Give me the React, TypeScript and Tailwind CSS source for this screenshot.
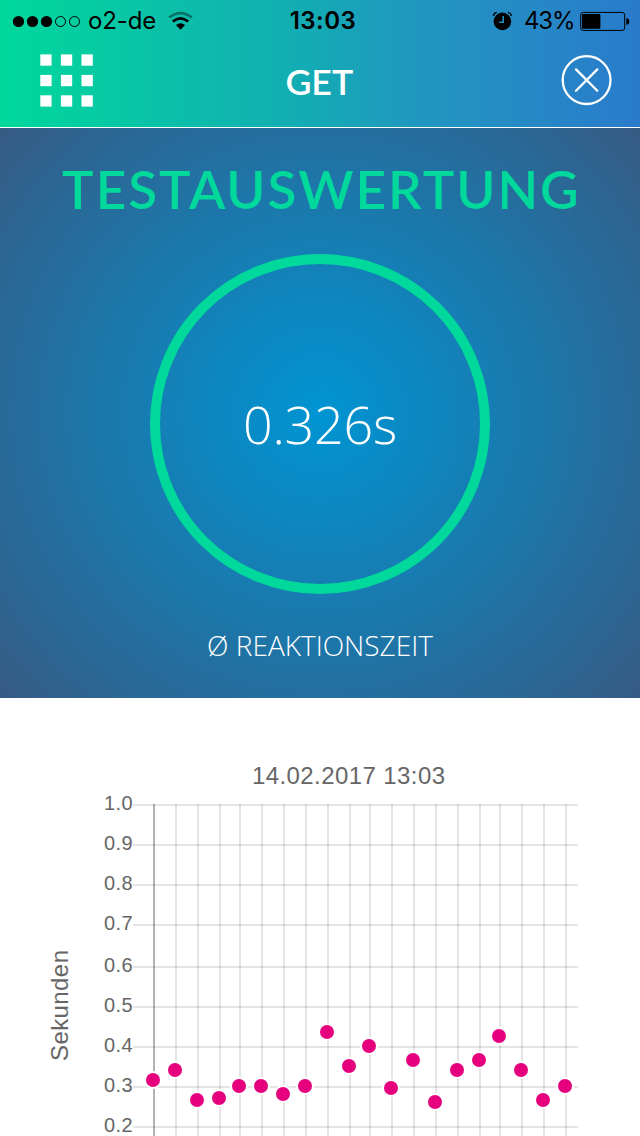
const POINTS = [
  { x: 153, y: 382 },
  { x: 175, y: 372 },
  { x: 197, y: 402 },
  { x: 219, y: 400 },
  { x: 239, y: 388 },
  { x: 261, y: 388 },
  { x: 283, y: 396 },
  { x: 305, y: 388 },
  { x: 327, y: 334 },
  { x: 349, y: 368 },
  { x: 369, y: 348 },
  { x: 391, y: 390 },
  { x: 413, y: 362 },
  { x: 435, y: 404 },
  { x: 457, y: 372 },
  { x: 479, y: 362 },
  { x: 499, y: 338 },
  { x: 521, y: 372 },
  { x: 543, y: 402 },
  { x: 565, y: 388 },
];

const TICKS = [
  { label: "1.0", y: 107 },
  { label: "0.9", y: 147 },
  { label: "0.8", y: 187 },
  { label: "0.7", y: 227 },
  { label: "0.6", y: 269 },
  { label: "0.5", y: 309 },
  { label: "0.4", y: 349 },
  { label: "0.3", y: 389 },
  { label: "0.2", y: 429 },
];

function StatusBar() {
  return (
    <div className="grid h-10 grid-cols-[1fr_auto_1fr] items-center pl-3 pr-[10px] font-['Inter',sans-serif] text-[24px] leading-10 text-black">
      <div className="flex items-center">
        <svg width="70" height="14" viewBox="0 0 70 14">
          {[6.5, 20.5, 34.5].map((cx) => (
            <circle key={cx} cx={cx} cy="7.5" r="5.6" />
          ))}
          {[48.5, 62.5].map((cx) => (
            <circle key={cx} cx={cx} cy="7.5" r="5" fill="none" stroke="#000" />
          ))}
        </svg>
        <span className="ml-[6px] w-[69px] whitespace-nowrap pt-px tracking-[-0.1px]">
          o2-de
        </span>
        <svg
          className="ml-[11px]"
          width="25"
          height="20"
          viewBox="0 0 25 20"
          fill="none"
          stroke="#000"
        >
          <path d="M1.2 6.5Q12.5-2.3 23.8 6.5" strokeWidth="2.8" opacity="0.4" />
          <path d="M4.8 10.5Q12.5 4.2 20.2 10.5" strokeWidth="2.8" />
          <path
            d="M7.9 14.1Q12.5 10.2 17.1 14.1L12.5 18.8Z"
            fill="#000"
            stroke="none"
          />
        </svg>
      </div>
      <span className="whitespace-nowrap pl-1 pt-px text-center font-semibold tracking-[0.5px]">
        13:03
      </span>
      <div className="flex items-center justify-end">
        <svg className="mr-3" width="20" height="20" viewBox="0 0 20 20">
          <circle cx="10.4" cy="10.4" r="8.8" />
          <path
            d="M1.4 4.8Q1.9 2 4.8 1.4M19.4 4.8Q18.9 2 16 1.4"
            fill="none"
            stroke="#000"
            strokeWidth="1.4"
          />
          <path
            d="M11.2 5V11.2H7.2"
            fill="none"
            stroke="#2191bf"
            strokeWidth="1.6"
          />
        </svg>
        <span className="w-[51px] whitespace-nowrap pt-px tracking-[-1.2px]">
          43%
        </span>
        <svg className="ml-[5px]" width="50" height="20" viewBox="0 0 50 20">
          <rect
            x=".7"
            y="1.4"
            width="44"
            height="18"
            rx="2.5"
            fill="none"
            stroke="#000"
          />
          <rect x="2" y="3" width="18.4" height="14.8" rx="1" />
          <path d="M46.3 6.9Q49.3 7.4 49.3 10.4T46.3 13.9Z" />
        </svg>
      </div>
    </div>
  );
}

function Header() {
  return (
    <header className="h-32 border-b border-white bg-[linear-gradient(90deg,#00d99b_0%,#15a9b5_50%,#2196c0_66%,#2a7bcb_100%)]">
      <StatusBar />
      <div className="flex h-20 items-center justify-between pl-10 pr-7">
        <svg
          width="53"
          height="53"
          viewBox="0 0 53 53"
          fill="#fff"
          className="w-[53px]"
        >
          {[0.4, 20.9, 41.3].map((y) =>
            [0.3, 20.9, 41.5].map((x) => (
              <rect key={`${x}-${y}`} x={x} y={y} width="11.3" height="11.3" />
            ))
          )}
        </svg>
        <h1 className="mr-[15px] mt-[3px] scale-x-105 whitespace-nowrap font-['Lato',sans-serif] text-[34px] font-semibold leading-none text-white">
          GET
        </h1>
        <svg
          width="51"
          height="51"
          viewBox="0 0 51 51"
          fill="none"
          stroke="#fff"
          strokeWidth="2.3"
          strokeLinecap="round"
        >
          <circle cx="25.6" cy="25.1" r="23.9" />
          <path d="M15 14.4 36.3 35.7M36.3 14.4 15 35.7" />
        </svg>
      </div>
    </header>
  );
}

function Result() {
  return (
    <section className="flex h-[570px] flex-col items-center bg-[radial-gradient(circle,#0095d3_0%,#365b84_100%)]">
      <h2 className="mt-8 flex h-[60px] scale-x-104 items-center whitespace-nowrap pl-[2px] font-['Lato',sans-serif] text-[51px] font-semibold leading-[60px] tracking-[1.9px] text-[#00d99b]">
        TESTAUSWERTUNG
      </h2>
      <div className="mt-[34px] flex size-[340px] items-center justify-center rounded-full border-10 border-[#00d99b]">
        <span className="font-['Open_Sans',sans-serif] text-[52px] font-light leading-none tracking-[-0.2px] text-white">
          0.326s
        </span>
      </div>
      <p className="mt-[31px] whitespace-nowrap font-['Open_Sans',sans-serif] text-[28px] font-light leading-10 text-white">
        Ø REAKTIONSZEIT
      </p>
    </section>
  );
}

function Chart() {
  return (
    <svg
      className="block font-['Liberation_Sans',sans-serif]"
      width="640"
      height="438"
      viewBox="0 0 640 438"
      fill="#666"
    >
      <text x="252" y="86" fontSize="24" textLength="193">
        14.02.2017 13:03
      </text>
      <text
        transform="translate(68 307.5) rotate(-90)"
        fontSize="24"
        textLength="111"
        textAnchor="middle"
      >
        Sekunden
      </text>
      {TICKS.map((tick) => (
        <g key={tick.label}>
          <text x="104" y={tick.y + 5} fontSize="20" textLength="28.5">
            {tick.label}
          </text>
          <path d={`M133 ${tick.y}H578`} stroke="#000" strokeOpacity="0.1" strokeWidth="2" />
        </g>
      ))}
      {POINTS.map((point, i) => (
        <path
          key={point.x}
          d={`M${point.x + 1} 106V438`}
          stroke="#000"
          strokeOpacity={i === 0 ? 0.3 : 0.1}
          strokeWidth="2"
        />
      ))}
      {POINTS.map((point) => (
        <circle
          key={point.x}
          cx={point.x}
          cy={point.y}
          r="8"
          fill="#e6007e"
          stroke="#fff"
          strokeWidth="2"
        />
      ))}
    </svg>
  );
}

export default function App() {
  return (
    <div className="h-[1136px] w-[640px] overflow-hidden bg-white">
      <Header />
      <Result />
      <Chart />
    </div>
  );
}
